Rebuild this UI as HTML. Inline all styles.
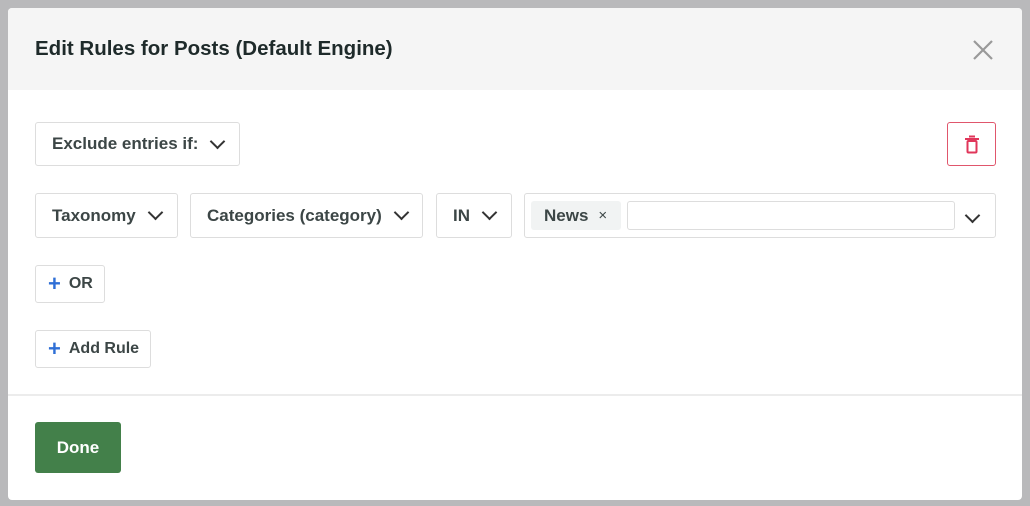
<!DOCTYPE html>
<html><head><style>
body{margin:0;width:1030px;height:506px;background:#b9b9bb;position:relative;overflow:hidden;font-family:"Liberation Sans",sans-serif;}
.modal{position:absolute;left:8px;top:8px;width:1014px;height:492px;background:#fff;border-radius:4px;overflow:hidden}
.hdr{position:absolute;left:0;top:0;width:100%;height:82px;background:#f5f5f5}
.hdr h1{position:absolute;left:27px;top:29px;margin:0;font-size:20.5px;font-weight:bold;color:#1e2a2a}
.b{position:absolute;border:1px solid #ddd;border-radius:3px;box-sizing:border-box;font-size:17px;font-weight:bold;color:#3c4646;display:flex;align-items:center;background:#fff}
.chev{display:inline-block;width:9px;height:9px;border-right:2px solid #333;border-bottom:2px solid #333;transform:rotate(45deg);margin-top:-6px}
.plus{color:#2f6fd6;font-size:22px;font-weight:bold;margin-right:8px;line-height:1}
</style></head><body>
<div class="modal">
<div class="hdr"><h1>Edit Rules for Posts (Default Engine)</h1>
<svg style="position:absolute;left:964px;top:31px" width="22" height="22"><path d="M2 2L20 20M20 2L2 20" stroke="#999" stroke-width="2.2"/></svg></div>
<div class="b" style="left:27px;top:114px;width:205px;height:44px;padding-left:16px">Exclude entries if:<span class="chev" style="margin-left:14px"></span></div>
<div class="b" style="left:939px;top:114px;width:49px;height:44px;border-color:#e0566c;justify-content:center">
<svg width="14" height="19"><path d="M4 1.5h6M0 4h14" stroke="#e0365a" stroke-width="2"/><rect x="2.5" y="6" width="9" height="11.5" rx="1" fill="none" stroke="#e0365a" stroke-width="2"/></svg></div>
<div class="b" style="left:27px;top:185px;width:143px;height:45px;padding-left:16px">Taxonomy<span class="chev" style="margin-left:14px"></span></div>
<div class="b" style="left:182px;top:185px;width:233px;height:45px;padding-left:16px">Categories (category)<span class="chev" style="margin-left:14px"></span></div>
<div class="b" style="left:428px;top:185px;width:76px;height:45px;padding-left:16px">IN<span class="chev" style="margin-left:14px"></span></div>
<div class="b" style="left:516px;top:185px;width:472px;height:45px">
<div style="position:absolute;left:6px;top:7px;width:90px;height:29px;background:#f1f3f3;border-radius:3px;display:flex;align-items:center;padding-left:13px;box-sizing:border-box">News<span style="font-size:15px;margin-left:10px;font-weight:normal">×</span></div>
<div style="position:absolute;left:102px;top:7px;width:328px;height:29px;border:1px solid #ddd;border-radius:3px;box-sizing:border-box"></div>
<span class="chev" style="position:absolute;left:442px;top:16px;margin:0"></span></div>
<div class="b" style="left:27px;top:257px;width:70px;height:38px;padding-left:12px;font-size:16px"><span class="plus">+</span>OR</div>
<div class="b" style="left:27px;top:322px;width:116px;height:38px;padding-left:12px;font-size:16px"><span class="plus">+</span>Add Rule</div>
<div style="position:absolute;left:0;top:386px;width:100%;height:2px;background:#ececec"></div>
<div style="position:absolute;left:27px;top:414px;width:86px;height:51px;background:#43804a;border-radius:3px;color:#fff;font-weight:bold;font-size:17px;display:flex;align-items:center;justify-content:center">Done</div>
</div>
</body></html>
